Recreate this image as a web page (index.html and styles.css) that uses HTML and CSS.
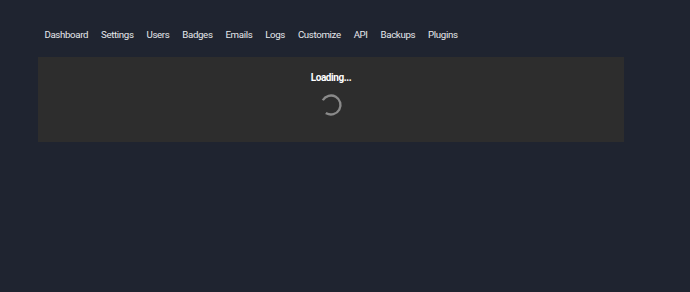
FILE: index.html
```html
<!DOCTYPE html>
<html>
<head>
<meta charset="utf-8">
<link rel="stylesheet" href="styles.css">
</head>
<body>
<div class="page">
  <nav class="admin-nav">
    <a class="nav-item">Dashboard</a>
    <a class="nav-item">Settings</a>
    <a class="nav-item">Users</a>
    <a class="nav-item">Badges</a>
    <a class="nav-item">Emails</a>
    <a class="nav-item">Logs</a>
    <a class="nav-item">Customize</a>
    <a class="nav-item">API</a>
    <a class="nav-item">Backups</a>
    <a class="nav-item">Plugins</a>
  </nav>
  <section class="panel">
    <div class="loading-text">Loading...</div>
    <svg class="spinner" width="24" height="24" viewBox="0 0 24 24">
      <circle cx="12" cy="12" r="9.5" fill="none" stroke="#8a8a8a" stroke-width="2.4" stroke-dasharray="45 15" transform="rotate(-150 12 12)"/>
    </svg>
  </section>
</div>
</body>
</html>
```
FILE: styles.css
```css
html, body {
  margin: 0;
  padding: 0;
  background: #1f2430;
  font-family: Roboto, "Liberation Sans", sans-serif;
}
.page {
  padding: 26px 66px 0 38px;
}
.admin-nav {
  display: flex;
  height: 17px;
  align-items: center;
  margin-bottom: 14px;
}
.nav-item {
  color: #e6e8ec;
  font-size: 9.7px;
  letter-spacing: -0.35px;
  padding: 0 6.5px 0 6.4px;
  white-space: nowrap;
}
.panel {
  width: 586px;
  height: 85px;
  background: #2d2d2d;
  display: flex;
  flex-direction: column;
  align-items: center;
  box-sizing: border-box;
  padding-top: 15px;
}
.loading-text {
  color: #ffffff;
  font-weight: bold;
  font-size: 10px;
  letter-spacing: -0.4px;
  line-height: 12px;
}
.spinner {
  margin-top: 9px;
  display: block;
}
```
